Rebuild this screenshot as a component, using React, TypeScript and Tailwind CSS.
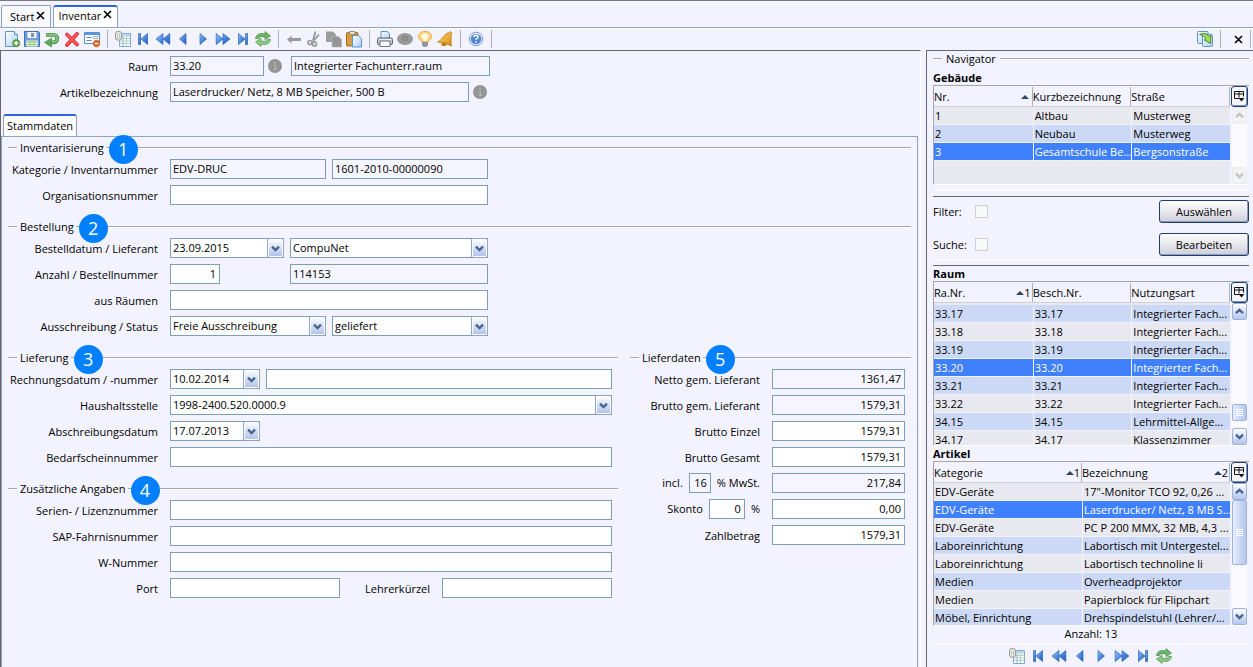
import type { ReactNode } from "react";

/* ---------- shared gradients ---------- */

function GradientDefs() {
  return (
    <svg width="0" height="0" className="absolute" aria-hidden="true">
      <defs>
        <linearGradient id="blue" x1="0" y1="0" x2="1" y2="1">
          <stop offset="0" stopColor="#9cc8f8" />
          <stop offset="0.5" stopColor="#4a8be0" />
          <stop offset="1" stopColor="#1c56b8" />
        </linearGradient>
        <linearGradient id="sheet" x1="0" y1="0" x2="1" y2="1">
          <stop offset="0" stopColor="#ffffff" />
          <stop offset="1" stopColor="#a9d0f5" />
        </linearGradient>
        <linearGradient id="green" x1="0" y1="0" x2="0" y2="1">
          <stop offset="0" stopColor="#8fcf8a" />
          <stop offset="1" stopColor="#3f9440" />
        </linearGradient>
        <linearGradient id="gold" x1="0" y1="0" x2="1" y2="1">
          <stop offset="0" stopColor="#ffe27a" />
          <stop offset="1" stopColor="#d9860a" />
        </linearGradient>
      </defs>
    </svg>
  );
}

/* ---------- icons ---------- */

function Icon({ children }: { children: ReactNode }) {
  return (
    <svg width="18" height="18" viewBox="0 0 18 18" fill="none" aria-hidden="true" className="shrink-0">
      {children}
    </svg>
  );
}

const NewIcon = () => (
  <Icon>
    <path d="M2.500 1.500h9l3 3v12h-12z" fill="url(#sheet)" stroke="#5b92cc" />
    <path d="M11.500 1.500v3h3" stroke="#5b92cc" fill="#fff" />
    <circle cx="13.200" cy="13.200" r="3.600" fill="#5fa548" stroke="#3c7d2e" strokeWidth=".6" />
    <path d="M13.200 11v4.400M11 13.200h4.400" stroke="#fff" strokeWidth="1.400" />
  </Icon>
);
const SaveIcon = () => (
  <Icon>
    <path d="M1.500 1.500h14l1 1v14h-15z" fill="#6d9fdc" stroke="#3f72b5" />
    <path d="M4.500 2h9v6h-9z" fill="#f0f6ff" />
    <path d="M8 3h3v4H8z" fill="#7f93ad" />
    <path d="M3.500 10.500h11v6h-11z" fill="#f4f8ee" />
    <path d="M4.500 12h9M4.500 14.500h9" stroke="#8fc36a" strokeWidth="1.300" />
  </Icon>
);
const UndoIcon = () => (
  <Icon>
    <path d="M3 4.800h7.500a3.800 3.800 0 0 1 0 7.600H8" stroke="#3f8f42" strokeWidth="3.800" />
    <path d="M3.300 4.700h7.200a3.800 3.800 0 0 1 0 7.600H8" stroke="#7cc176" strokeWidth="2.400" />
    <path d="M1.500 12.500 8.500 8v9z" fill="#5aa957" stroke="#3f8f42" strokeWidth=".6" />
  </Icon>
);
const DeleteIcon = () => (
  <Icon>
    <path d="m4 4.500 10 10M14 4 4 15" stroke="#d8232a" strokeWidth="3.800" strokeLinecap="round" />
    <path d="m4 4.500 9.800 9.800M13.800 4.200 4 14.800" stroke="#ff5a5a" strokeWidth="2.200" strokeLinecap="round" />
  </Icon>
);
const FormIcon = () => (
  <Icon>
    <path d="M1.500 2.500h15v11h-15z" fill="#f7fbff" stroke="#5b8fd0" />
    <path d="M1.500 2.500h15v2.500h-15z" fill="#5b93dc" />
    <path d="M3.500 7.500h5M3.500 10.500h5" stroke="#6f89a8" strokeWidth="1.200" />
    <path d="M10.500 6.500h4v2h-4z" stroke="#8aaad0" strokeWidth=".8" />
    <circle cx="13.500" cy="13.500" r="3.200" fill="#e8661c" stroke="#c04c0c" strokeWidth=".6" />
    <path d="M11.700 13.500h3.600" stroke="#fff" strokeWidth="1.300" />
  </Icon>
);
const ListIcon = () => (
  <Icon>
    <path d="M5.500 3.500h11v13h-11z" fill="#f4faff" stroke="#86a9cf" />
    <path d="M6 4h10v2.500H6z" fill="#b8d4f0" />
    <path d="M6 8.500h10M6 11h10M6 13.500h10M12.500 6v10" stroke="#a3cba8" strokeWidth=".8" />
    <path d="M9 6v10" stroke="#86a9cf" strokeWidth=".8" />
    <rect x="1.500" y="1.500" width="6" height="8.500" rx="2" fill="#e6e6e2" stroke="#9a9a94" />
    <path d="M3.500 3.500v5M5.500 3.500v5" stroke="#c8c8c2" />
  </Icon>
);
const FirstIcon = () => (
  <Icon>
    <path d="M4.500 3.500h2v11h-2z" fill="url(#blue)" stroke="#2b63b8" strokeWidth=".7" />
    <path d="M13.500 3.500v11L7 9z" fill="url(#blue)" stroke="#2b63b8" strokeWidth=".7" />
  </Icon>
);
const RewindIcon = () => (
  <Icon>
    <path d="M9 3.500v11L2 9zM15.800 3.500v11L9 9z" fill="url(#blue)" stroke="#2b63b8" strokeWidth=".7" />
  </Icon>
);
const PrevIcon = () => (
  <Icon>
    <path d="M12 3.500v11L5.500 9z" fill="url(#blue)" stroke="#2b63b8" strokeWidth=".7" />
  </Icon>
);
const NextIcon = () => (
  <Icon>
    <path d="M6 3.500v11L12.500 9z" fill="url(#blue)" stroke="#2b63b8" strokeWidth=".7" />
  </Icon>
);
const ForwardIcon = () => (
  <Icon>
    <path d="M2.200 3.500v11L9 9zM9 3.500v11L16 9z" fill="url(#blue)" stroke="#2b63b8" strokeWidth=".7" />
  </Icon>
);
const LastIcon = () => (
  <Icon>
    <path d="M4.500 3.500v11L11 9z" fill="url(#blue)" stroke="#2b63b8" strokeWidth=".7" />
    <path d="M11.500 3.500h2v11h-2z" fill="url(#blue)" stroke="#2b63b8" strokeWidth=".7" />
  </Icon>
);
const RefreshIcon = () => (
  <Icon>
    <path d="M1.500 8.500C2 4.500 6 2.500 11 4V1.500l5.500 4.500-5.500 3.700V7.200C7.500 6 5 6.800 4.500 8.500z" fill="#6db567" stroke="#3a8338" strokeWidth=".6" />
    <path d="M16.500 9.500C16 13.500 12 15.500 7 14v2.500L1.500 12 7 8.300v2.500c3.500 1.200 6 .4 6.500-1.300z" fill="#8aca84" stroke="#3a8338" strokeWidth=".6" />
  </Icon>
);
const BackGrayIcon = () => (
  <Icon>
    <path d="M2 9.500 6.500 5.500v2.500H16v3H6.500v2.500z" fill="#9a9a9a" />
  </Icon>
);
const CutIcon = () => (
  <Icon>
    <path d="M8 10.500 10.500 1.500M8 11.500l6-7" stroke="#9a9a9a" strokeWidth="1.900" />
    <circle cx="5" cy="12.500" r="2" stroke="#9a9a9a" strokeWidth="1.700" />
    <circle cx="9.500" cy="14" r="2" stroke="#9a9a9a" strokeWidth="1.700" />
  </Icon>
);
const CopyIcon = () => (
  <Icon>
    <path d="M1 1.500h7l3 3V12H1z" fill="#9c9c9c" />
    <path d="M7 6.500h6.500l3 3V17H7z" fill="#949494" stroke="#b5b5b5" strokeWidth=".8" />
  </Icon>
);
const PasteIcon = () => (
  <Icon>
    <rect x="1.500" y="2.500" width="11.500" height="13.500" rx="1" fill="#d99a45" stroke="#a76a1c" />
    <path d="M4.500 1.500h5.500v3H4.500z" fill="#e8e0d0" stroke="#8f7d5c" strokeWidth=".8" />
    <path d="M7.500 5.500h6l3 3v8.500h-9z" fill="url(#sheet)" stroke="#5b92cc" />
  </Icon>
);
const PrintIcon = () => (
  <Icon>
    <path d="M5 1.500h6.500l2 2V9H5z" fill="url(#sheet)" stroke="#5b92cc" />
    <rect x="1.500" y="8" width="15" height="6.500" rx="1.500" fill="#c3c7cf" stroke="#60656f" />
    <path d="M4 11h10v5.500H4z" fill="#f8f8fc" stroke="#70757f" />
    <path d="M3 9.500h12" stroke="#f0f0f4" />
  </Icon>
);
const EyeIcon = () => (
  <Icon>
    <ellipse cx="9" cy="9" rx="8" ry="6" fill="#9a9a9a" />
    <circle cx="9" cy="8.500" r="3" fill="#868686" />
    <circle cx="9" cy="8.500" r="1" fill="#a8a8a8" />
  </Icon>
);
const BulbIcon = () => (
  <Icon>
    <path d="M9 1.500c4 0 6.500 2 6.500 5 0 2.500-2.500 3.500-3.500 5.500H6C5 10 2.500 9 2.500 6.500c0-3 2.500-5 6.500-5z" fill="#ffd98a" stroke="#e8a23c" />
    <path d="M9 3.500c2 0 3 1 3 2.500S10.500 8.500 10 11H8C7.500 8.500 6 7.500 6 6s1-2.500 3-2.500z" fill="#fffbe6" />
    <path d="M6.500 12.500h5v3l-1 1h-3l-1-1z" fill="#8f98a8" stroke="#6c7484" strokeWidth=".6" />
  </Icon>
);
const BellIcon = () => (
  <Icon>
    <path d="M14.500 1.500c1.500 1 1.500 2.500.5 4 .5 3.700-.5 6.500.5 10.500-3.500-2-8-3.300-14-4C6.500 9.500 7 6.500 10 4c1.500-1.200 3-.8 4.500-2.500z" fill="url(#gold)" stroke="#b87408" strokeWidth=".8" />
    <ellipse cx="8" cy="14.300" rx="2.600" ry="2" fill="#c47b0a" />
  </Icon>
);
const HelpIcon = () => (
  <Icon>
    <circle cx="9" cy="9" r="6.800" fill="#e8f0fa" stroke="#7f9cc4" />
    <circle cx="9" cy="9" r="5.300" fill="#5087cf" />
    <path d="M7 7.300c0-2.600 4-2.600 4-.3 0 1.500-2 1.500-2 3.100M9 11.300v1.400" stroke="#fff" strokeWidth="1.500" />
  </Icon>
);
const ExportIcon = () => (
  <Icon>
    <rect x="1.500" y="1.500" width="10.500" height="12" rx="1" fill="url(#sheet)" stroke="#5b92cc" />
    <rect x="6.500" y="4.500" width="10" height="12" rx="1" fill="url(#sheet)" stroke="#5b92cc" />
    <path d="M3.500 4.500c4-2 7.500-1 9 2l2.500-1.200-.5 8-6.500-3.500 2-1.200c-1.500-2.300-3.500-3.600-6.500-4.100z" fill="#a4e04a" stroke="#2f7f2a" strokeWidth=".9" />
  </Icon>
);

function CloseX() {
  return (
    <svg width="9" height="9" viewBox="0 0 9 9" aria-hidden="true">
      <path d="m1 1 7 7M8 1 1 8" stroke="#000" strokeWidth="1.600" />
    </svg>
  );
}

function Chevron({ up, muted }: { up?: boolean; muted?: boolean }) {
  return (
    <svg width="9" height="7" viewBox="0 0 9 7" fill="none" aria-hidden="true">
      <path d={up ? "M1 5.200 4.500 1.800 8 5.200" : "M1 1.600 4.500 5 8 1.600"} stroke={muted ? "#c4c4c8" : "#48658f"} strokeWidth="2.400" />
    </svg>
  );
}

function InfoDot() {
  return (
    <svg width="14" height="14" viewBox="0 0 14 14" className="mx-1 shrink-0" aria-hidden="true">
      <circle cx="7" cy="7" r="7" fill="#949494" />
      <path d="M6 3h2v1.600H6zM5.500 6H8v4h1v1H5.500v-1h1V7h-1z" fill="#b4b4b4" />
    </svg>
  );
}

function SortMark({ n }: { n?: string }) {
  return (
    <span className={`flex items-center ${n ? "" : "pr-[2px]"}`}>
      <svg width="8" height="4" viewBox="0 0 8 4" aria-hidden="true">
        <path d="M4 0 8 4H0z" fill="#2b4564" />
      </svg>
      {n}
    </span>
  );
}

/* ---------- form building blocks ---------- */

const FIELD = "h-5 min-w-0 border border-[#7f9db9] px-[2px] text-[11px] text-black outline-none";

function Field({ id, label, value = "", w, ro, right }: { id?: string; label?: string; value?: string; w: string; ro?: boolean; right?: boolean }) {
  return (
    <input
      id={id}
      aria-label={label}
      defaultValue={value}
      readOnly={ro}
      className={`${FIELD} pb-[2px] ${w} ${ro ? "bg-[#f5f5ff]" : "bg-white"} ${right ? "pr-[3px] text-right" : ""}`}
    />
  );
}

function Combo({ id, label, value, w }: { id?: string; label?: string; value: string; w: string }) {
  return (
    <span className={`relative flex ${w}`}>
      <select id={id} aria-label={label} className={`${FIELD} w-full appearance-none bg-white`}>
        <option>{value}</option>
      </select>
      <span className="pointer-events-none absolute inset-y-0 right-0 flex w-[17px] items-center justify-center rounded-[2px] border border-[#8ea6c6] bg-linear-to-b from-white to-[#aebfe8] ring-1 ring-white ring-inset">
        <Chevron />
      </span>
    </span>
  );
}

function Row({ id, label, children, labelW = "w-[150px]" }: { id: string; label: string; children: ReactNode; labelW?: string }) {
  return (
    <div className="flex h-5 items-center">
      <label htmlFor={id} className={`mr-3 shrink-0 pt-[2px] text-right ${labelW}`}>
        {label}
      </label>
      {children}
    </div>
  );
}

function Rule({ w }: { w: string }) {
  return <span className={`h-[2px] border-t border-b border-t-[#a5a5ad] border-b-white ${w}`} />;
}

function Section({ title, n, children }: { title: string; n: string; children: ReactNode }) {
  return (
    <section>
      <h2 className="flex h-[22px] items-center">
        <Rule w="w-[9px]" />
        <span className="ml-[3px] pr-[2px]">{title}</span>
        <Rule w="w-[3px]" />
        <span className="z-10 mt-[2px] flex size-[29px] shrink-0 items-center justify-center rounded-full bg-[#0080ff] text-[18px] text-white">{n}</span>
        <Rule w="flex-1" />
      </h2>
      <div className="flex flex-col gap-[6px]">{children}</div>
    </section>
  );
}

/* ---------- toolbar ---------- */

function Tool({ label, children, w = "w-5" }: { label: string; children: ReactNode; w?: string }) {
  return (
    <button type="button" aria-label={label} className={`flex h-5 items-center justify-center ${w}`}>
      {children}
    </button>
  );
}

function Divider() {
  return (
    <span className="flex w-[11px] justify-center">
      <span className="h-[18px] w-px bg-[#b0b0b4]" />
    </span>
  );
}

function NavTools({ w }: { w?: string }) {
  return (
    <>
      <Tool w={w} label="Liste"><ListIcon /></Tool>
      <Tool w={w} label="Erster"><FirstIcon /></Tool>
      <Tool w={w} label="Schnell zurück"><RewindIcon /></Tool>
      <Tool w={w} label="Zurück"><PrevIcon /></Tool>
      <Tool w={w} label="Weiter"><NextIcon /></Tool>
      <Tool w={w} label="Schnell vor"><ForwardIcon /></Tool>
      <Tool w={w} label="Letzter"><LastIcon /></Tool>
      <Tool w={w} label="Aktualisieren"><RefreshIcon /></Tool>
    </>
  );
}

function Toolbar() {
  return (
    <div className="flex h-[22px] items-start justify-between border-t border-white">
      <div className="flex items-center pl-[2px]">
        <Tool label="Neu"><NewIcon /></Tool>
        <Tool label="Speichern"><SaveIcon /></Tool>
        <Tool label="Rückgängig"><UndoIcon /></Tool>
        <Tool label="Löschen"><DeleteIcon /></Tool>
        <Tool label="Formular"><FormIcon /></Tool>
        <Divider />
        <NavTools />
        <Divider />
        <Tool label="Vorherige"><BackGrayIcon /></Tool>
        <Tool label="Ausschneiden"><CutIcon /></Tool>
        <Tool label="Kopieren"><CopyIcon /></Tool>
        <Tool label="Einfügen"><PasteIcon /></Tool>
        <Divider />
        <Tool label="Drucken"><PrintIcon /></Tool>
        <Tool label="Ansicht"><EyeIcon /></Tool>
        <Tool label="Hinweis"><BulbIcon /></Tool>
        <Tool label="Erinnerung"><BellIcon /></Tool>
        <Divider />
        <Tool label="Hilfe"><HelpIcon /></Tool>
        <Divider />
      </div>
      <div className="flex items-center">
        <Tool label="Exportieren"><ExportIcon /></Tool>
        <Divider />
        <Tool label="Schließen" w="w-6"><CloseX /></Tool>
        <span className="mr-[2px] h-[18px] w-px bg-[#b0b0b4]" />
      </div>
    </div>
  );
}

/* ---------- navigator ---------- */

type Column = { title: string; sort?: boolean; n?: string };

function ScrollButton({ up, muted }: { up?: boolean; muted?: boolean }) {
  return (
    <button
      type="button"
      aria-label={up ? "Nach oben" : "Nach unten"}
      className={`flex h-[17px] w-[15px] shrink-0 items-center justify-center rounded-[2px] border ${
        muted ? "border-[#ececf0] bg-[#f2f2f5]" : "border-[#9db2dc] bg-linear-to-b from-white to-[#b4c5ec]"
      }`}
    >
      <Chevron up={up} muted={muted} />
    </button>
  );
}

function NavTable({ cols, rows, selected, height, odd, offset, thumb }: {
  cols: Column[];
  rows: string[][];
  selected: number;
  height: string;
  odd: boolean;
  offset?: boolean;
  thumb?: string;
}) {
  return (
    <div className={`flex overflow-hidden border-t border-b border-l border-t-[#a5a5ad] border-b-white border-l-[#a5a5ad] ${height}`}>
      <div className="min-w-0 flex-1 overflow-hidden bg-[#e8e8f0]">
        <table className="w-full table-fixed border-separate border-spacing-0">
          <thead>
            <tr className="h-[21px] bg-[#f3f3ff]">
              {cols.map((c) => (
                <th key={c.title} className="h-[21px] border-b border-b-[#d0d0d8] p-0 text-left font-normal">
                  <span className="flex h-[19px] items-center justify-between border-r border-[#b0b0b8] pt-px pr-px whitespace-nowrap">
                    {c.title}
                    {c.sort && <SortMark n={c.n} />}
                  </span>
                </th>
              ))}
            </tr>
          </thead>
          <tbody>
            {offset && (
              <tr className="h-[2px]">
                <td colSpan={cols.length} className="h-[2px] p-0" />
              </tr>
            )}
            {rows.map((r, i) => {
              const tone = i === selected ? "bg-[#3f80ff] text-white" : (i % 2 === 1) === odd ? "bg-[#ccd9f6]" : "bg-[#e8e8f0]";
              return (
                <tr key={i} className={tone}>
                  {r.map((t, j) => (
                    <td key={j} className="h-[18px] overflow-hidden border-b border-l border-[#f3f3ff] p-0 pl-px leading-[17px] whitespace-nowrap first:border-l-0">
                      {t}
                    </td>
                  ))}
                </tr>
              );
            })}
          </tbody>
        </table>
      </div>
      <div className="flex w-[19px] shrink-0 flex-col items-center">
        <button type="button" aria-label="Spalten" className="flex h-[21px] w-[17px] shrink-0 items-center justify-center rounded-[3px] border border-[#1c3f72] bg-[#f6f6fc] shadow-[inset_-1px_-1px_0_#7f93b8]">
          <svg width="11" height="11" viewBox="0 0 11 11" fill="none" aria-hidden="true">
            <path d="M.5 7.500v-7h9v5M.5 3h9M5 .5v6M.5 7.500H5" stroke="#111" />
            <path d="M4.500 7h6L7.500 10.500z" fill="#111" />
          </svg>
        </button>
        <div className="flex w-[15px] flex-1 flex-col bg-[#fbfbff]">
          <ScrollButton up muted={!thumb} />
          <div className="flex flex-1 flex-col">
            {thumb && (
              <div className={`flex flex-col items-center justify-center gap-px rounded-[2px] border border-[#9db2dc] bg-linear-to-r from-[#e6edfd] to-[#b4c5ec] ${thumb}`}>
                <span className="h-px w-[7px] bg-white" />
                <span className="h-px w-[7px] bg-white" />
                <span className="h-px w-[7px] bg-white" />
                <span className="h-px w-[7px] bg-white" />
              </div>
            )}
          </div>
          <ScrollButton muted={!thumb} />
        </div>
      </div>
    </div>
  );
}

function Separator() {
  return <div className="h-[7px] border-t border-b border-t-white border-b-[#66666c]" />;
}

function Check({ id, label, action }: { id: string; label: string; action: string }) {
  return (
    <div className="flex h-[23px] items-center">
      <label htmlFor={id} className="w-[42px] shrink-0">
        {label}
      </label>
      <input id={id} type="checkbox" className="size-[13px] appearance-none border border-[#cfcfd4] bg-[#f8f8f8]" />
      <button type="button" className="ml-auto h-[23px] w-[90px] rounded-[3px] border border-[#1c3f72] bg-linear-to-b from-white to-[#cfcfdc] shadow-[inset_-1px_-1px_0_#8f9db8]">
        {action}
      </button>
    </div>
  );
}

const BUILDINGS = [
  ["1", "Altbau", "Musterweg"],
  ["2", "Neubau", "Musterweg"],
  ["3", "Gesamtschule Be...", "Bergsonstraße"],
];

const ROOMS = [
  ["33.17", "33.17", "Integrierter Fach..."],
  ["33.18", "33.18", "Integrierter Fach..."],
  ["33.19", "33.19", "Integrierter Fach..."],
  ["33.20", "33.20", "Integrierter Fach..."],
  ["33.21", "33.21", "Integrierter Fach..."],
  ["33.22", "33.22", "Integrierter Fach..."],
  ["34.15", "34.15", "Lehrmittel-Allge..."],
  ["34.17", "34.17", "Klassenzimmer"],
];

const ARTICLES = [
  ["EDV-Geräte", '17"-Monitor TCO 92, 0,26 ...'],
  ["EDV-Geräte", "Laserdrucker/ Netz, 8 MB S..."],
  ["EDV-Geräte", "PC P 200 MMX, 32 MB, 4,3 ..."],
  ["Laboreinrichtung", "Labortisch mit Untergestel..."],
  ["Laboreinrichtung", "Labortisch technoline li"],
  ["Medien", "Overheadprojektor"],
  ["Medien", "Papierblock für Flipchart"],
  ["Möbel, Einrichtung", "Drehspindelstuhl (Lehrer/..."],
];

function Navigator() {
  return (
    <aside className="w-[327px] shrink-0 border-t border-l border-[#66666c] pr-1 pl-[6px]">
      <h2 className="flex h-4 items-center">
        <Rule w="w-[9px]" />
        <span className="mx-1">Navigator</span>
        <Rule w="flex-1" />
      </h2>
      <h3 className="mt-1 h-[14px] font-bold">Gebäude</h3>
      <NavTable
        cols={[{ title: "Nr.", sort: true }, { title: "Kurzbezeichnung" }, { title: "Straße" }]}
        rows={BUILDINGS}
        selected={2}
        height="h-[100px]"
        odd
      />
      <div className="mt-[5px]">
        <Separator />
      </div>
      <div className="my-[3px] flex flex-col gap-[10px]">
        <Check id="filter" label="Filter:" action="Auswählen" />
        <Check id="suche" label="Suche:" action="Bearbeiten" />
      </div>
      <Separator />
      <h3 className="mt-px h-[14px] font-bold">Raum</h3>
      <NavTable
        cols={[{ title: "Ra.Nr.", sort: true, n: "1" }, { title: "Besch.Nr." }, { title: "Nutzungsart" }]}
        rows={ROOMS}
        selected={3}
        height="h-[165px]"
        odd={false}
        offset
        thumb="mt-[84px] h-[17px]"
      />
      <h3 className="mt-px h-[14px] font-bold">Artikel</h3>
      <NavTable
        cols={[{ title: "Kategorie", sort: true, n: "1" }, { title: "Bezeichnung", sort: true, n: "2" }]}
        rows={ARTICLES}
        selected={1}
        height="h-[165px]"
        odd
        thumb="h-[65px]"
      />
      <p className="mt-px h-[17px] text-center">Anzahl: 13</p>
      <div className="flex justify-center border-t border-white pt-px pr-[2px]">
        <NavTools w="w-[21px]" />
      </div>
    </aside>
  );
}

/* ---------- page ---------- */

export default function App() {
  return (
    <div className="flex min-h-screen flex-col border-t border-[#77777c] bg-[#f3f3ff] font-['Open_Sans','Noto_Sans',sans-serif] text-[11px] leading-[14px] text-black">
      <GradientDefs />
      <nav className="flex h-[27px] items-end gap-[2px] border-b border-[#8fa3bd] pl-px">
        <div className="flex h-[22px] items-center gap-[2px] rounded-t-[2px] border border-b-0 border-[#8fa3bd] bg-[#f9f9ff] pr-[5px] pl-2">
          <button type="button">Start</button>
          <button type="button" aria-label="Start schließen" className="pb-[2px]"><CloseX /></button>
        </div>
        <div className="flex h-[22px] items-center gap-[2px] rounded-t-[3px] border border-t-2 border-b-0 border-[#8fa3bd] border-t-[#2f66dd] bg-white pr-[5px] pb-[3px] pl-1">
          <button type="button">Inventar</button>
          <button type="button" aria-label="Inventar schließen" className="pb-[2px]"><CloseX /></button>
        </div>
      </nav>
      <Toolbar />

      <div className="flex flex-1 gap-[5px]">
        <main className="flex min-w-0 flex-1 flex-col border-t border-r border-l border-[#66666c] border-r-white pt-[5px] pr-[2px]">
          <div className="flex flex-col gap-[6px]">
            <Row id="raum" label="Raum" labelW="w-[157px]">
              <Field id="raum" value="33.20" w="w-[94px]" ro />
              <InfoDot />
              <span className="ml-[5px] flex">
                <Field label="Raumbezeichnung" value="Integrierter Fachunterr.raum" w="w-[199px]" ro />
              </span>
            </Row>
            <Row id="artikel" label="Artikelbezeichnung" labelW="w-[157px]">
              <Field id="artikel" value="Laserdrucker/ Netz, 8 MB Speicher, 500 B" w="w-[299px]" ro />
              <InfoDot />
            </Row>
          </div>

          <div className="mt-3 flex pl-[2px]">
            <button type="button" className="h-[22px] rounded-t-[3px] border border-t-2 border-b-0 border-[#8fa3bd] border-t-[#2f66dd] bg-white px-[3px]">
              Stammdaten
            </button>
          </div>

          <div className="flex flex-1 flex-col gap-[11px] border-t border-r border-l border-[#8fa3bd] px-[6px]">
            <Section title="Inventarisierung" n="1">
              <Row id="kategorie" label="Kategorie / Inventarnummer">
                <div className="flex w-[318px] gap-[6px]">
                  <Field id="kategorie" value="EDV-DRUC" w="flex-1" ro />
                  <Field label="Inventarnummer" value="1601-2010-00000090" w="flex-1" ro />
                </div>
              </Row>
              <Row id="orgnr" label="Organisationsnummer">
                <Field id="orgnr" w="w-[318px]" />
              </Row>
            </Section>

            <Section title="Bestellung" n="2">
              <Row id="bestelldatum" label="Bestelldatum / Lieferant">
                <div className="flex w-[318px] justify-between">
                  <Combo id="bestelldatum" value="23.09.2015" w="w-[114px]" />
                  <Combo label="Lieferant" value="CompuNet" w="w-[198px]" />
                </div>
              </Row>
              <Row id="anzahl" label="Anzahl / Bestellnummer">
                <div className="flex w-[318px] justify-between">
                  <Field id="anzahl" value="1" w="w-[50px]" right />
                  <Field label="Bestellnummer" value="114153" w="w-[198px]" ro />
                </div>
              </Row>
              <Row id="raeume" label="aus Räumen">
                <Field id="raeume" w="w-[318px]" />
              </Row>
              <Row id="ausschreibung" label="Ausschreibung / Status">
                <div className="flex w-[318px] gap-[6px]">
                  <Combo id="ausschreibung" value="Freie Ausschreibung" w="flex-1" />
                  <Combo label="Status" value="geliefert" w="flex-1" />
                </div>
              </Row>
            </Section>

            <div className="flex gap-3">
              <div className="flex min-w-0 flex-1 flex-col gap-[11px]">
                <Section title="Lieferung" n="3">
                  <Row id="rechnung" label="Rechnungsdatum / -nummer">
                    <div className="mr-[6px] flex min-w-0 flex-1 gap-[6px]">
                      <Combo id="rechnung" value="10.02.2014" w="w-[90px]" />
                      <Field label="Rechnungsnummer" w="flex-1" />
                    </div>
                  </Row>
                  <Row id="haushalt" label="Haushaltsstelle">
                    <div className="mr-[6px] flex min-w-0 flex-1">
                      <Combo id="haushalt" value="1998-2400.520.0000.9" w="flex-1" />
                    </div>
                  </Row>
                  <Row id="abschreibung" label="Abschreibungsdatum">
                    <Combo id="abschreibung" value="17.07.2013" w="w-[90px]" />
                  </Row>
                  <Row id="bedarf" label="Bedarfscheinnummer">
                    <Field id="bedarf" w="mr-[6px] flex-1" />
                  </Row>
                </Section>

                <Section title="Zusätzliche Angaben" n="4">
                  <Row id="serie" label="Serien- / Lizenznummer">
                    <Field id="serie" w="mr-[6px] flex-1" />
                  </Row>
                  <Row id="sap" label="SAP-Fahrnisnummer">
                    <Field id="sap" w="mr-[6px] flex-1" />
                  </Row>
                  <Row id="wnr" label="W-Nummer">
                    <Field id="wnr" w="mr-[6px] flex-1" />
                  </Row>
                  <Row id="port" label="Port">
                    <div className="mr-[6px] flex min-w-0 flex-1 items-center">
                      <Field id="port" w="flex-1" />
                      <label htmlFor="lehrer" className="mr-3 w-[90px] shrink-0 pt-[2px] text-right">
                        Lehrerkürzel
                      </label>
                      <Field id="lehrer" w="flex-1" />
                    </div>
                  </Row>
                </Section>
              </div>

              <div className="w-[281px] shrink-0">
                <Section title="Lieferdaten" n="5">
                  <Row id="netto" label="Netto gem. Lieferant" labelW="w-[130px]">
                    <Field id="netto" value="1361,47" w="w-[133px]" ro right />
                  </Row>
                  <Row id="brutto" label="Brutto gem. Lieferant" labelW="w-[130px]">
                    <Field id="brutto" value="1579,31" w="w-[133px]" ro right />
                  </Row>
                  <Row id="einzel" label="Brutto Einzel" labelW="w-[130px]">
                    <Field id="einzel" value="1579,31" w="w-[133px]" right />
                  </Row>
                  <Row id="gesamt" label="Brutto Gesamt" labelW="w-[130px]">
                    <Field id="gesamt" value="1579,31" w="w-[133px]" right />
                  </Row>
                  <div className="flex h-5 items-center">
                    <div className="mr-3 flex w-[130px] items-center justify-end gap-[6px]">
                      <label htmlFor="satz">incl.</label>
                      <Field id="satz" value="16" w="w-[22px]" ro right />
                      <label htmlFor="mwst">% MwSt.</label>
                    </div>
                    <Field id="mwst" value="217,84" w="w-[133px]" ro right />
                  </div>
                  <div className="flex h-5 items-center">
                    <div className="mr-3 flex w-[130px] items-center justify-end gap-[6px]">
                      <label htmlFor="skonto">Skonto</label>
                      <Field id="skonto" value="0" w="w-[36px]" right />
                      <label htmlFor="skontobetrag">%</label>
                    </div>
                    <Field id="skontobetrag" value="0,00" w="w-[133px]" right />
                  </div>
                  <Row id="zahl" label="Zahlbetrag" labelW="w-[130px]">
                    <Field id="zahl" value="1579,31" w="w-[133px]" right />
                  </Row>
                </Section>
              </div>
            </div>
          </div>
        </main>

        <Navigator />
      </div>
    </div>
  );
}
